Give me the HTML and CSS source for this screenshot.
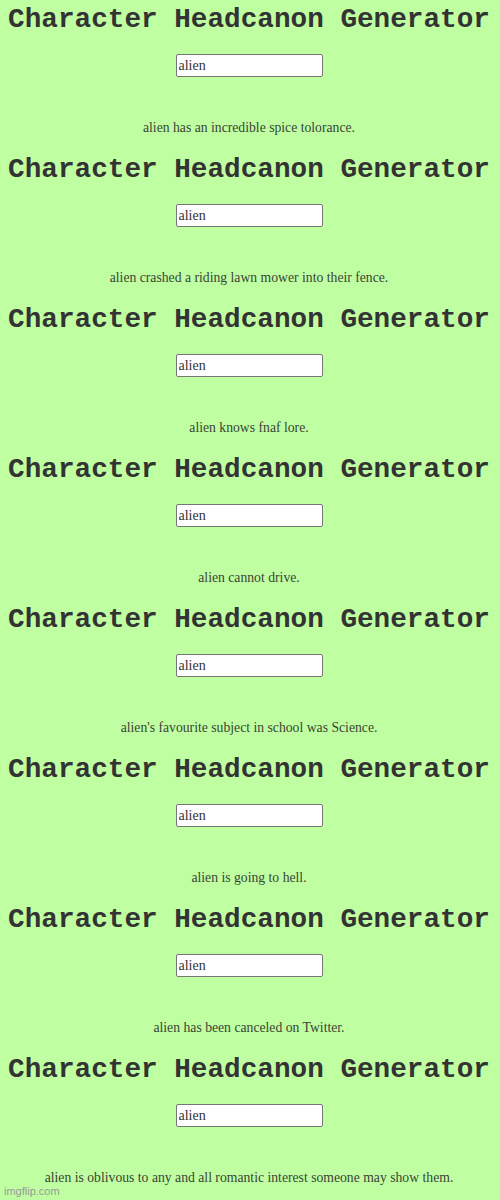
FILE: index.html
```html
<!DOCTYPE html>
<html>

<head>
    <meta charset="UTF-8">
    <title>Character Headcanon Generator</title>
    <link rel="stylesheet" href="styles.css">
</head>

<body>
    <div class="page">
        <div class="block">
            <h1>Character Headcanon Generator</h1>
            <input type="text" class="name" value="alien">
            <p class="result">alien has an incredible spice tolorance.</p>
        </div>
        <div class="block">
            <h1>Character Headcanon Generator</h1>
            <input type="text" class="name" value="alien">
            <p class="result">alien crashed a riding lawn mower into their fence.</p>
        </div>
        <div class="block">
            <h1>Character Headcanon Generator</h1>
            <input type="text" class="name" value="alien">
            <p class="result">alien knows fnaf lore.</p>
        </div>
        <div class="block">
            <h1>Character Headcanon Generator</h1>
            <input type="text" class="name" value="alien">
            <p class="result">alien cannot drive.</p>
        </div>
        <div class="block">
            <h1>Character Headcanon Generator</h1>
            <input type="text" class="name" value="alien">
            <p class="result">alien's favourite subject in school was Science.</p>
        </div>
        <div class="block">
            <h1>Character Headcanon Generator</h1>
            <input type="text" class="name" value="alien">
            <p class="result">alien is going to hell.</p>
        </div>
        <div class="block">
            <h1>Character Headcanon Generator</h1>
            <input type="text" class="name" value="alien">
            <p class="result">alien has been canceled on Twitter.</p>
        </div>
        <div class="block">
            <h1>Character Headcanon Generator</h1>
            <input type="text" class="name" value="alien">
            <p class="result">alien is oblivous to any and all romantic interest someone may show them.</p>
        </div>
        <span class="watermark">imgflip.com</span>
    </div>
</body>

</html>
```
FILE: styles.css
```css
body {
    margin: 0;
    background-color: #bfffa1;
    color: #333;
    font-family: "Liberation Serif", serif;
}

.page {
    position: relative;
    width: 500px;
    height: 1200px;
}

.block {
    display: flex;
    flex-direction: column;
    align-items: center;
    height: 150px;
    box-sizing: border-box;
    padding: 5px 2px 0 0;
}

h1 {
    margin: 0;
    font-family: "Liberation Mono", monospace;
    font-size: 27.7px;
    font-weight: bold;
    line-height: 30px;
    white-space: nowrap;
}

.name {
    margin-top: 19px;
    width: 147px;
    height: 23px;
    box-sizing: border-box;
    padding: 0 2px;
    border: 1px solid #767676;
    border-radius: 2px;
    background-color: #fff;
    color: #333;
    font-family: "Liberation Serif", serif;
    font-size: 14px;
}

.result {
    margin: 43px 0 0;
    font-size: 13.7px;
    line-height: 16px;
    white-space: nowrap;
    color: #3a4436;
}

.watermark {
    position: absolute;
    left: 4px;
    bottom: 3px;
    font-family: "Liberation Sans", sans-serif;
    font-size: 11px;
    color: #999;
}
```
